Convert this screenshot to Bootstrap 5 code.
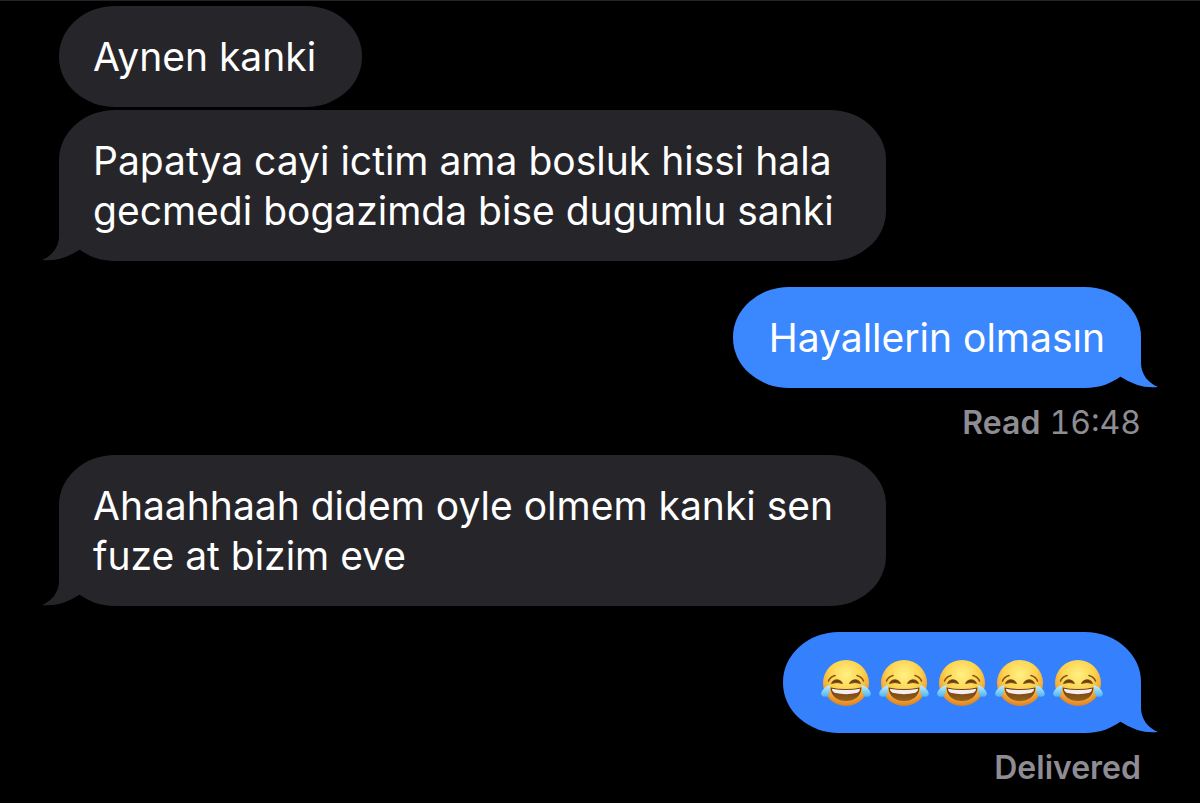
<!DOCTYPE html>
<html lang="tr" data-bs-theme="dark">
<head>
<meta charset="utf-8">
<meta name="viewport" content="width=device-width, initial-scale=1">
<title>Messages</title>
<link href="https://cdn.jsdelivr.net/npm/bootstrap@5.3.0/dist/css/bootstrap.min.css" rel="stylesheet">
<style>
  body {
    background: #000;
    border-top: 1px solid #242426;
    font-family: Inter, "Liberation Sans", sans-serif;
    color: #fff;
  }
  .thread { padding: 5px 59px 12px; }
  .bubble {
    max-width: 76.4%;
    padding: 26px 36px 25px;
    border-radius: 56px / 50px;
    font-size: 39px;
    line-height: 50px;
  }
  .incoming { background: #26252a; margin-bottom: 26px; padding-left: 34px; }
  .incoming.grouped { margin-bottom: 3px; padding-right: 46px; }
  .outgoing { background: #3a87fe; }
  .outgoing.latest { background: #3581fd; padding-left: 34px; padding-right: 34px; }
  .tail { bottom: 0; width: 64px; height: 51px; fill: #26252a; }
  .incoming .tail { left: -17px; }
  .outgoing .tail { right: -17px; fill: #3a87fe; }
  .outgoing.latest .tail { fill: #3581fd; }
  .receipt {
    padding: 15px 0 12px;
    font-size: 32px;
    line-height: 40px;
    color: #8e8d93;
  }
  .receipt time { font-variant-numeric: tabular-nums; }
  .laugh { width: 58px; height: 50px; }
</style>
</head>
<body>
<svg class="position-absolute" width="0" height="0" aria-hidden="true">
  <defs>
    <radialGradient id="face" cx="50%" cy="32%" r="70%">
      <stop offset="0" stop-color="#fff084"/>
      <stop offset=".5" stop-color="#fdd44f"/>
      <stop offset=".78" stop-color="#f3a536"/>
      <stop offset="1" stop-color="#d87a20"/>
    </radialGradient>
    <linearGradient id="tear" x1="0" y1="0" x2="0" y2="1">
      <stop offset="0" stop-color="#c2f0fa"/>
      <stop offset="1" stop-color="#4db4f0"/>
    </linearGradient>
    <linearGradient id="mouth" x1="0" y1="0" x2="0" y2="1">
      <stop offset="0" stop-color="#6b3c12"/>
      <stop offset="1" stop-color="#95601c"/>
    </linearGradient>
  </defs>
</svg>
<main class="thread d-flex flex-column">
  <div class="bubble incoming grouped align-self-start">Aynen kanki</div>
  <div class="bubble incoming align-self-start position-relative">
    Papatya cayi ictim ama bosluk hissi hala gecmedi bogazimda bise dugumlu sanki
    <svg class="tail position-absolute" viewBox="0 0 64 51" aria-hidden="true"><path d="M17 0V26C17 37 10 46 0 50Q19 52 37 40L50 31V0Z"/></svg>
  </div>
  <div class="bubble outgoing align-self-end position-relative">
    Hayallerin olmasın
    <svg class="tail position-absolute" viewBox="0 0 64 51" aria-hidden="true"><path d="M47 0V26C47 37 54 46 64 50Q45 52 27 40L14 31V0Z"/></svg>
  </div>
  <div class="receipt text-end"><span class="fw-semibold">Read</span> <time>16:48</time></div>
  <div class="bubble incoming align-self-start position-relative">
    Ahaahhaah didem oyle olmem kanki sen fuze at bizim eve
    <svg class="tail position-absolute" viewBox="0 0 64 51" aria-hidden="true"><path d="M17 0V26C17 37 10 46 0 50Q19 52 37 40L50 31V0Z"/></svg>
  </div>
  <div class="bubble outgoing latest align-self-end position-relative">
    <div class="d-flex" role="img" aria-label="Face with tears of joy, five times">
      <svg class="laugh" viewBox="0 0 58 50">
        <g id="joy">
          <circle cx="29" cy="25" r="23" fill="url(#face)"/>
          <path d="M11.500 23Q13 19 18 17.500M46.500 23Q45 19 40 17.500" fill="none" stroke="#8a5216" stroke-width="1.600" stroke-linecap="round"/>
          <path d="M14.500 25.500C16 20.500 23.500 20.500 25.500 25.500Q20 23.500 14.500 25.500ZM32.500 25.500C34.500 20.500 42 20.500 43.500 25.500Q38 23.500 32.500 25.500Z" fill="#6b3f10" stroke="#6b3f10" stroke-width=".8" stroke-linejoin="round"/>
          <path d="M13.500 29.500Q29 32.500 44.500 29.500C44 38.500 37.500 43 29 43S14 38.500 13.500 29.500Z" fill="url(#mouth)"/>
          <path d="M14.800 30.800Q29 33.400 43.200 30.800Q43 34 40.500 34.800Q29 37.600 17.500 34.800Q15 34 14.800 30.800Z" fill="#f4eeee"/>
          <path d="M13.500 27C9 28 4 32.500 4.200 36C4.500 39.500 10.500 40 12 36C13 33 13 30 13.500 27Z" fill="url(#tear)"/>
          <path d="M44.500 27C49 28 54 32.500 53.800 36C53.500 39.500 47.500 40 46 36C45 33 45 30 44.500 27Z" fill="url(#tear)"/>
        </g>
      </svg>
      <svg class="laugh" viewBox="0 0 58 50"><use href="#joy"/></svg>
      <svg class="laugh" viewBox="0 0 58 50"><use href="#joy"/></svg>
      <svg class="laugh" viewBox="0 0 58 50"><use href="#joy"/></svg>
      <svg class="laugh" viewBox="0 0 58 50"><use href="#joy"/></svg>
    </div>
    <svg class="tail position-absolute" viewBox="0 0 64 51" aria-hidden="true"><path d="M47 0V26C47 37 54 46 64 50Q45 52 27 40L14 31V0Z"/></svg>
  </div>
  <div class="receipt text-end pb-0"><span class="fw-semibold">Delivered</span></div>
</main>
<script src="https://cdn.jsdelivr.net/npm/bootstrap@5.3.0/dist/js/bootstrap.bundle.min.js"></script>
</body>
</html>
